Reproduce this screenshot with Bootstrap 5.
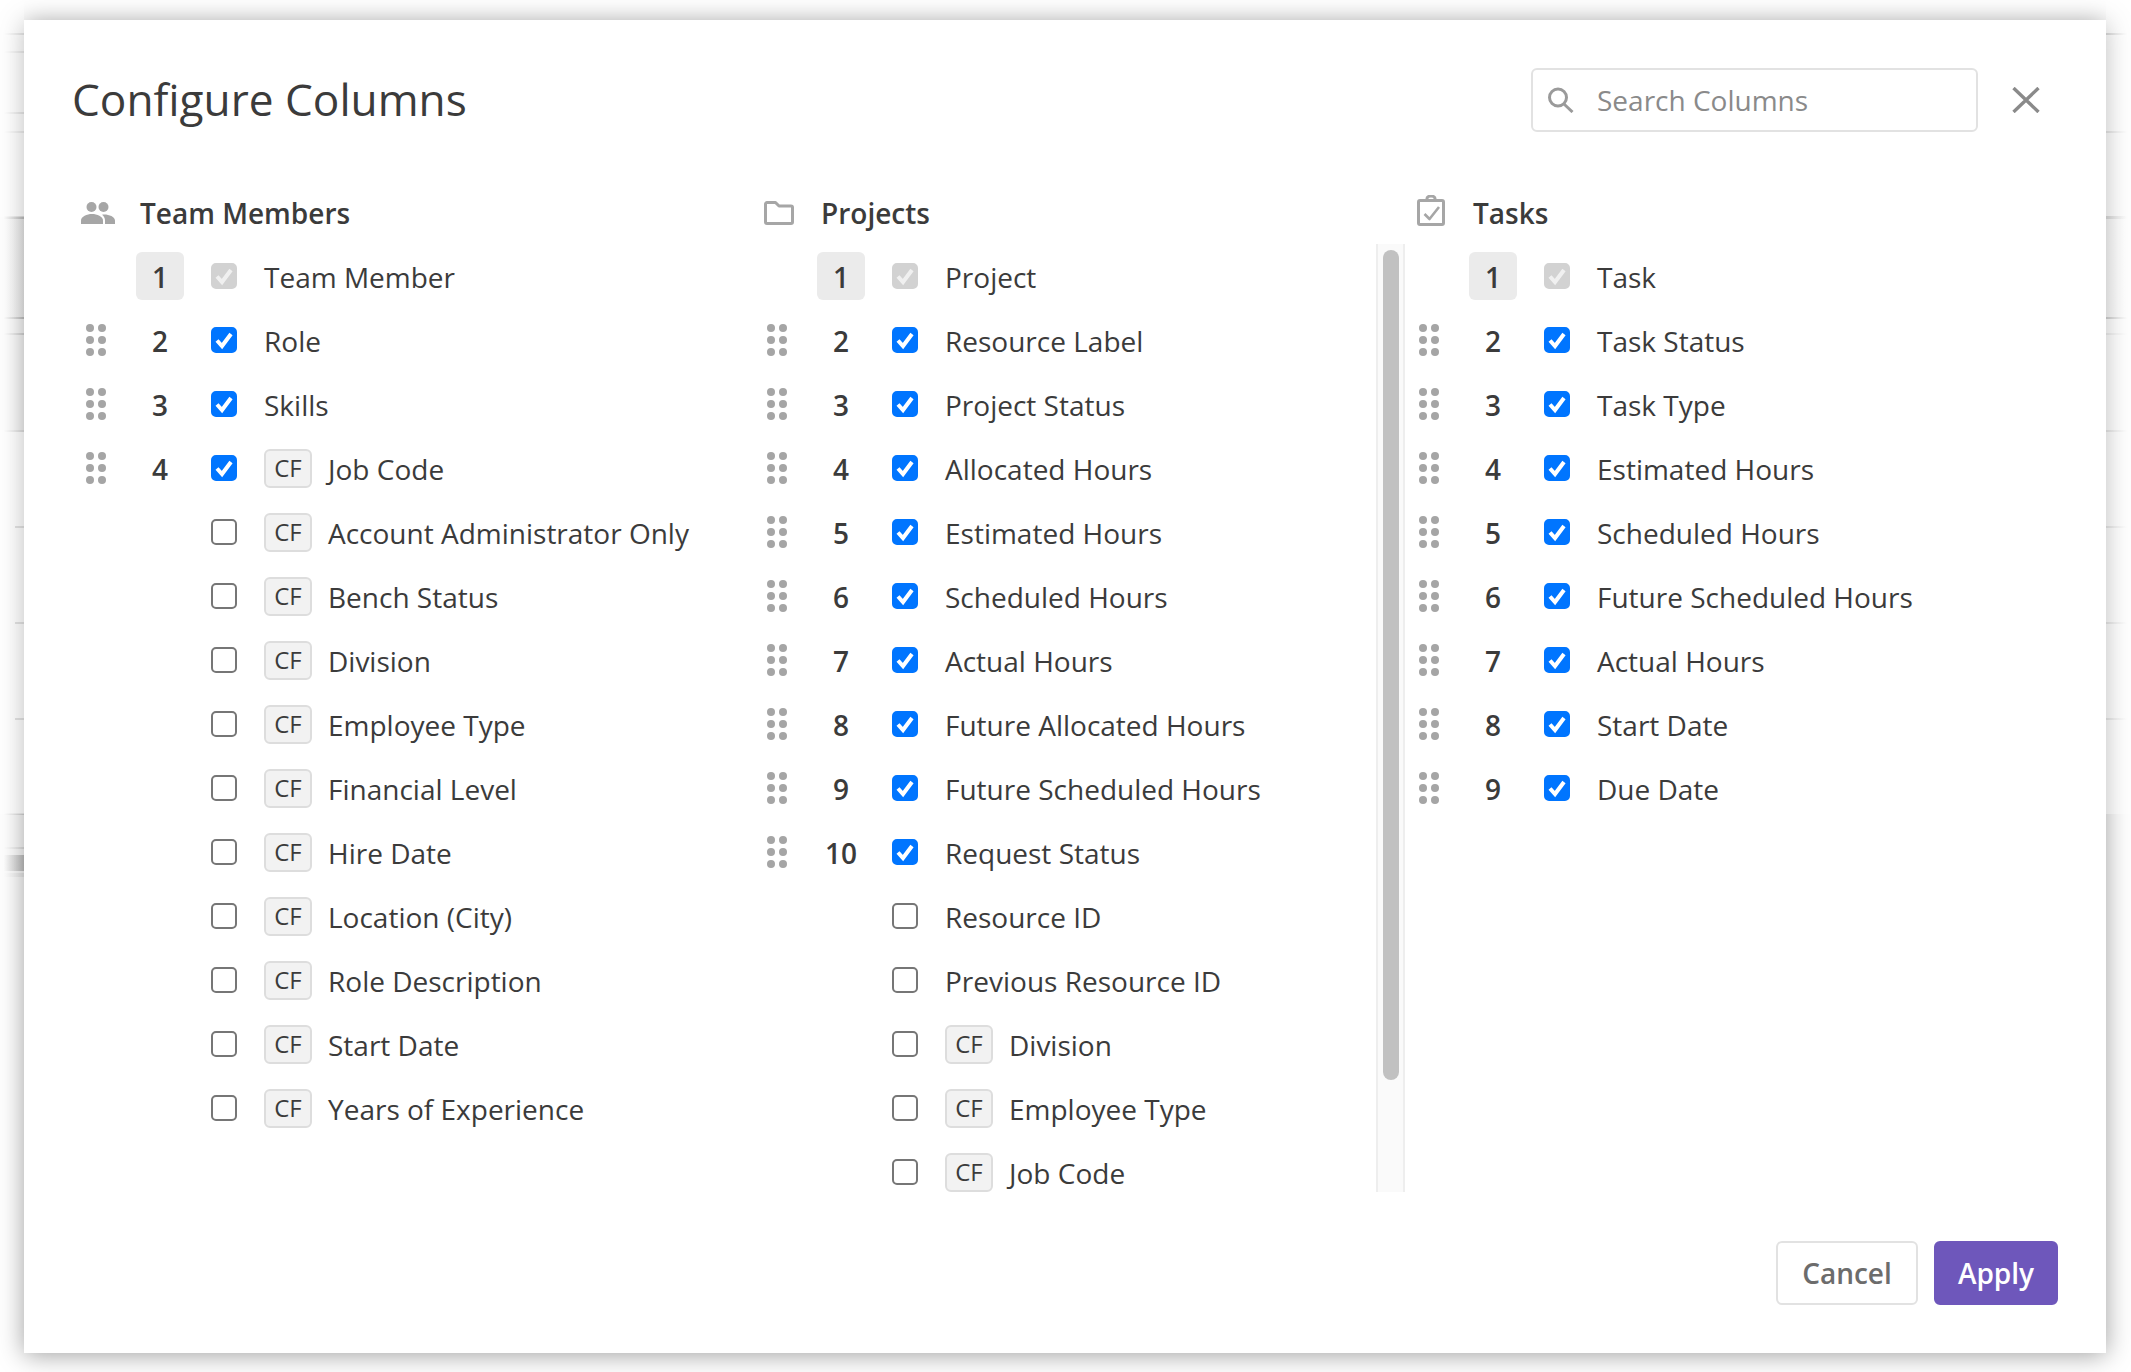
<!DOCTYPE html>
<html lang="en">
<head>
<meta charset="utf-8">
<title>Configure Columns</title>
<link href="https://cdn.jsdelivr.net/npm/bootstrap@5.3.0/dist/css/bootstrap.min.css" rel="stylesheet">
<style>
html,body{height:100%;margin:0;background:#fff;overflow:hidden}
body{font-family:"Open Sans","Noto Sans",sans-serif;color:#3b3b3b;font-size:28px}
.back-page{position:absolute;inset:0;background:
 linear-gradient(90deg,transparent 15%,#d8d8d8) 0 33px/24px 2px no-repeat,
 linear-gradient(90deg,transparent 15%,#e0e0e0) 0 51px/24px 2px no-repeat,
 linear-gradient(90deg,transparent 15%,#d8d8d8) 0 112px/24px 2px no-repeat,
 linear-gradient(90deg,transparent 15%,#e0e0e0) 0 131px/24px 2px no-repeat,
 linear-gradient(90deg,transparent 15%,#c8c8c8) 0 216px/24px 3px no-repeat,
 linear-gradient(90deg,transparent 25%,#f6f6f6) 0 219px/24px 98px no-repeat,
 linear-gradient(90deg,transparent 15%,#c8c8c8) 0 317px/24px 2px no-repeat,
 linear-gradient(90deg,transparent 15%,#dcdcdc) 0 333px/24px 2px no-repeat,
 linear-gradient(90deg,transparent 15%,#c8c8c8) 0 430px/24px 2px no-repeat,
 linear-gradient(#d4d4d4,#d4d4d4) 15px 526px/9px 2px no-repeat,
 linear-gradient(#d4d4d4,#d4d4d4) 15px 622px/9px 2px no-repeat,
 linear-gradient(#d4d4d4,#d4d4d4) 15px 718px/9px 2px no-repeat,
 linear-gradient(90deg,transparent 15%,#dcdcdc) 0 813px/24px 2px no-repeat,
 linear-gradient(90deg,transparent 15%,#e6e6e6) 0 847px/24px 2px no-repeat,
 linear-gradient(90deg,transparent 15%,#c6c6c6) 0 855px/24px 16px no-repeat,
 linear-gradient(90deg,transparent 15%,#eee) 0 873px/24px 4px no-repeat,
 linear-gradient(270deg,transparent 15%,#c8c8c8) 2106px 33px/25px 2px no-repeat,
 linear-gradient(270deg,transparent 15%,#d8d8d8) 2106px 131px/25px 2px no-repeat,
 linear-gradient(270deg,transparent 15%,#c8c8c8) 2106px 216px/25px 3px no-repeat,
 linear-gradient(270deg,transparent 25%,#f6f6f6) 2106px 219px/25px 98px no-repeat,
 linear-gradient(270deg,transparent 15%,#b8b8b8) 2106px 317px/25px 2px no-repeat,
 linear-gradient(270deg,transparent 15%,#e6e6e6) 2106px 333px/25px 2px no-repeat,
 linear-gradient(270deg,transparent 15%,#dcdcdc) 2106px 430px/25px 2px no-repeat,
 linear-gradient(270deg,transparent 15%,#dcdcdc) 2106px 526px/25px 2px no-repeat,
 linear-gradient(270deg,transparent 15%,#dcdcdc) 2106px 622px/25px 2px no-repeat,
 linear-gradient(270deg,transparent 15%,#dcdcdc) 2106px 718px/25px 2px no-repeat;}
.dlg-shadow{position:absolute;left:24px;top:20px;width:2082px;height:1333px;box-shadow:0 2px 24px rgba(0,0,0,.38)}
.veil-side{position:absolute;background:rgba(255,255,255,.32)}
.veil-r{left:2106px;top:0;width:25px;height:814px}
.veil-l{left:0;top:0;width:24px;height:217px}
.veil-l2{left:0;top:430px;width:24px;height:384px}
.cfg-dialog{position:absolute;left:24px;top:20px;width:2082px;height:1333px;background:#fff;padding:48px 48px 0 49px}
.cfg-title{font-size:44.2px;font-weight:400;line-height:64px;color:#3b3b3b;margin:-1px 0 0 -1px;height:65px}
.search-box{width:447px;height:64px;border:2px solid #e2e2e2;border-radius:6px;padding-left:14px;margin-right:34px}
.search-box svg{width:27px;height:26px;flex:none}
.search-input{border:0;outline:0;background:none;padding:0;margin-left:23px;font-size:28px;color:#3b3b3b;width:340px}
.search-input::placeholder{color:#8a8a8a;opacity:1}
.close-x{width:28px;height:26px;border:0;background:none;padding:0;margin-right:18px;display:flex}
.cols-wrap{margin-top:58px;margin-left:-1px}
.col-a{flex:0 0 681px}
.col-b{flex:0 0 652px}
.col-c{flex:1 1 auto}
.col-head{height:46px;margin-bottom:8px;font-weight:600;line-height:46px}
.head-ico{width:52px;margin-right:16px;flex:none;display:flex;justify-content:center}
.ico-raised{margin-bottom:5px}
.cols-list{height:948px;overflow:hidden}
.col-row{height:64px;padding-left:14px;line-height:1}
.grip{width:20px;height:32px;flex:none;fill:#a5a5a5}
.no-grip{width:20px;flex:none}
.num-cell{width:48px;height:48px;margin-left:30px;margin-right:27px;flex:none;border-radius:6px;text-align:center;line-height:50px;font-weight:600;color:#3b3b3b}
.num-locked{background:#ebebeb}
.form-check-input.cfg-check{width:26px;height:26px;margin:0;flex:none;border:2px solid #767676;border-radius:5px;background-size:26px 26px;box-shadow:none;opacity:1}
.form-check-input.cfg-check:checked{background-color:#0075ff;border-color:#0075ff;background-position:center;background-image:url("data:image/svg+xml,%3csvg xmlns='http://www.w3.org/2000/svg' viewBox='0 0 26 26'%3e%3cpath fill='none' stroke='%23fff' stroke-width='4' d='M6 13.5l5 5.5 9-12'/%3e%3c/svg%3e")}
.form-check-input.cfg-check:disabled{background-color:#d2d2d2;border-color:#d2d2d2;opacity:1;background-image:url("data:image/svg+xml,%3csvg xmlns='http://www.w3.org/2000/svg' viewBox='0 0 26 26'%3e%3cpath fill='none' stroke='%23f0f0f0' stroke-width='4' d='M6 13.5l5 5.5 9-12'/%3e%3c/svg%3e")}
.col-label{margin-left:27px;white-space:nowrap;padding-top:2px}
.cf-tag{width:48px;height:39px;margin-left:27px;margin-right:-11px;margin-top:1px;flex:none;border:2px solid #ddd;border-radius:6px;background:#f2f2f2;font-size:24px;line-height:33px;text-align:center;color:#3b3b3b}
.scroll-track{flex:0 0 29px;height:948px;background:#fafafa;border-left:2px solid #eee;border-right:2px solid #eee;padding:6px 4px 0 5px}
.scroll-thumb{height:830px;background:#c1c1c1;border-radius:8px}
.foot-bar{margin-top:49px}
.btn.btn-cancel,.btn.btn-apply{height:64px;font-size:28px;font-weight:600;padding:0;border-radius:6px;line-height:58px}
.btn.btn-cancel{width:142px;border:2px solid #e2e2e2;background:#fff;color:#6c6c6c}
.btn.btn-apply{width:124px;border:2px solid #6e57bb;background:#6e57bb;color:#fff;margin-left:16px}
</style>
</head>
<body>
<svg width="0" height="0" class="position-absolute">
<symbol id="grip6" viewBox="0 0 20 32"><circle cx="4" cy="4" r="4"/><circle cx="16" cy="4" r="4"/><circle cx="4" cy="16" r="4"/><circle cx="16" cy="16" r="4"/><circle cx="4" cy="28" r="4"/><circle cx="16" cy="28" r="4"/></symbol>
</svg>
<div class="back-page"></div>
<div class="dlg-shadow"></div>
<div class="veil-side veil-r"></div>
<div class="veil-side veil-l"></div>
<div class="veil-side veil-l2"></div>
<div class="cfg-dialog d-flex flex-column">
  <div class="d-flex align-items-center">
    <h1 class="cfg-title flex-grow-1">Configure Columns</h1>
    <div class="search-box d-flex align-items-center">
      <svg viewBox="0 0 27 26" fill="none" stroke="#9a9a9a" stroke-width="3"><circle cx="11" cy="10.5" r="8.5"/><path d="M17 17l8.5 8"/></svg>
      <input class="search-input" type="text" placeholder="Search Columns">
    </div>
    <button class="close-x" type="button" aria-label="Close"><svg width="28" height="26" viewBox="0 0 28 26" fill="none" stroke="#8a8a8a" stroke-width="3.4"><path d="M1.5 1l25 24M26.5 1l-25 24"/></svg></button>
  </div>
  <div class="cols-wrap d-flex">
    <section class="col-a">
      <div class="col-head d-flex align-items-center">
        <span class="head-ico"><svg width="34" height="22" viewBox="0 0 34 22" fill="#a6a6a6"><circle cx="10.5" cy="5" r="5"/><circle cx="22.5" cy="5" r="5"/><path d="M0 22v-3.500C0 14.500 6 12 11 12s11 2.500 11 6.500V22z"/><path d="M24 22v-3.500c0-2.500-1.200-4.500-3-5.800.8-.2 1.600-.2 2.400-.2 4.600 0 10.600 2.200 10.600 6V22z"/></svg></span>
        <span>Team Members</span>
      </div>
      <div class="cols-list">
        <div class="col-row d-flex align-items-center"><span class="no-grip"></span><span class="num-cell num-locked">1</span><input class="form-check-input cfg-check" type="checkbox" checked disabled><span class="col-label">Team Member</span></div>
        <div class="col-row d-flex align-items-center"><svg class="grip"><use href="#grip6"/></svg><span class="num-cell">2</span><input class="form-check-input cfg-check" type="checkbox" checked><span class="col-label">Role</span></div>
        <div class="col-row d-flex align-items-center"><svg class="grip"><use href="#grip6"/></svg><span class="num-cell">3</span><input class="form-check-input cfg-check" type="checkbox" checked><span class="col-label">Skills</span></div>
        <div class="col-row d-flex align-items-center"><svg class="grip"><use href="#grip6"/></svg><span class="num-cell">4</span><input class="form-check-input cfg-check" type="checkbox" checked><span class="cf-tag">CF</span><span class="col-label">Job Code</span></div>
        <div class="col-row d-flex align-items-center"><span class="no-grip"></span><span class="num-cell"></span><input class="form-check-input cfg-check" type="checkbox"><span class="cf-tag">CF</span><span class="col-label">Account Administrator Only</span></div>
        <div class="col-row d-flex align-items-center"><span class="no-grip"></span><span class="num-cell"></span><input class="form-check-input cfg-check" type="checkbox"><span class="cf-tag">CF</span><span class="col-label">Bench Status</span></div>
        <div class="col-row d-flex align-items-center"><span class="no-grip"></span><span class="num-cell"></span><input class="form-check-input cfg-check" type="checkbox"><span class="cf-tag">CF</span><span class="col-label">Division</span></div>
        <div class="col-row d-flex align-items-center"><span class="no-grip"></span><span class="num-cell"></span><input class="form-check-input cfg-check" type="checkbox"><span class="cf-tag">CF</span><span class="col-label">Employee Type</span></div>
        <div class="col-row d-flex align-items-center"><span class="no-grip"></span><span class="num-cell"></span><input class="form-check-input cfg-check" type="checkbox"><span class="cf-tag">CF</span><span class="col-label">Financial Level</span></div>
        <div class="col-row d-flex align-items-center"><span class="no-grip"></span><span class="num-cell"></span><input class="form-check-input cfg-check" type="checkbox"><span class="cf-tag">CF</span><span class="col-label">Hire Date</span></div>
        <div class="col-row d-flex align-items-center"><span class="no-grip"></span><span class="num-cell"></span><input class="form-check-input cfg-check" type="checkbox"><span class="cf-tag">CF</span><span class="col-label">Location (City)</span></div>
        <div class="col-row d-flex align-items-center"><span class="no-grip"></span><span class="num-cell"></span><input class="form-check-input cfg-check" type="checkbox"><span class="cf-tag">CF</span><span class="col-label">Role Description</span></div>
        <div class="col-row d-flex align-items-center"><span class="no-grip"></span><span class="num-cell"></span><input class="form-check-input cfg-check" type="checkbox"><span class="cf-tag">CF</span><span class="col-label">Start Date</span></div>
        <div class="col-row d-flex align-items-center"><span class="no-grip"></span><span class="num-cell"></span><input class="form-check-input cfg-check" type="checkbox"><span class="cf-tag">CF</span><span class="col-label">Years of Experience</span></div>
      </div>
    </section>
    <section class="col-b">
      <div class="col-head d-flex align-items-center">
        <span class="head-ico"><svg width="30" height="24" viewBox="0 0 30 24" fill="none" stroke="#a6a6a6" stroke-width="3" stroke-linejoin="round"><path d="M1.500 3a1.500 1.500 0 0 1 1.500-1.500h8.500l3.500 3.500h12a1.500 1.500 0 0 1 1.500 1.500V21a1.500 1.500 0 0 1-1.500 1.500H3A1.500 1.500 0 0 1 1.500 21z"/></svg></span>
        <span>Projects</span>
      </div>
      <div class="d-flex">
        <div class="cols-list flex-grow-1">
          <div class="col-row d-flex align-items-center"><span class="no-grip"></span><span class="num-cell num-locked">1</span><input class="form-check-input cfg-check" type="checkbox" checked disabled><span class="col-label">Project</span></div>
          <div class="col-row d-flex align-items-center"><svg class="grip"><use href="#grip6"/></svg><span class="num-cell">2</span><input class="form-check-input cfg-check" type="checkbox" checked><span class="col-label">Resource Label</span></div>
          <div class="col-row d-flex align-items-center"><svg class="grip"><use href="#grip6"/></svg><span class="num-cell">3</span><input class="form-check-input cfg-check" type="checkbox" checked><span class="col-label">Project Status</span></div>
          <div class="col-row d-flex align-items-center"><svg class="grip"><use href="#grip6"/></svg><span class="num-cell">4</span><input class="form-check-input cfg-check" type="checkbox" checked><span class="col-label">Allocated Hours</span></div>
          <div class="col-row d-flex align-items-center"><svg class="grip"><use href="#grip6"/></svg><span class="num-cell">5</span><input class="form-check-input cfg-check" type="checkbox" checked><span class="col-label">Estimated Hours</span></div>
          <div class="col-row d-flex align-items-center"><svg class="grip"><use href="#grip6"/></svg><span class="num-cell">6</span><input class="form-check-input cfg-check" type="checkbox" checked><span class="col-label">Scheduled Hours</span></div>
          <div class="col-row d-flex align-items-center"><svg class="grip"><use href="#grip6"/></svg><span class="num-cell">7</span><input class="form-check-input cfg-check" type="checkbox" checked><span class="col-label">Actual Hours</span></div>
          <div class="col-row d-flex align-items-center"><svg class="grip"><use href="#grip6"/></svg><span class="num-cell">8</span><input class="form-check-input cfg-check" type="checkbox" checked><span class="col-label">Future Allocated Hours</span></div>
          <div class="col-row d-flex align-items-center"><svg class="grip"><use href="#grip6"/></svg><span class="num-cell">9</span><input class="form-check-input cfg-check" type="checkbox" checked><span class="col-label">Future Scheduled Hours</span></div>
          <div class="col-row d-flex align-items-center"><svg class="grip"><use href="#grip6"/></svg><span class="num-cell">10</span><input class="form-check-input cfg-check" type="checkbox" checked><span class="col-label">Request Status</span></div>
          <div class="col-row d-flex align-items-center"><span class="no-grip"></span><span class="num-cell"></span><input class="form-check-input cfg-check" type="checkbox"><span class="col-label">Resource ID</span></div>
          <div class="col-row d-flex align-items-center"><span class="no-grip"></span><span class="num-cell"></span><input class="form-check-input cfg-check" type="checkbox"><span class="col-label">Previous Resource ID</span></div>
          <div class="col-row d-flex align-items-center"><span class="no-grip"></span><span class="num-cell"></span><input class="form-check-input cfg-check" type="checkbox"><span class="cf-tag">CF</span><span class="col-label">Division</span></div>
          <div class="col-row d-flex align-items-center"><span class="no-grip"></span><span class="num-cell"></span><input class="form-check-input cfg-check" type="checkbox"><span class="cf-tag">CF</span><span class="col-label">Employee Type</span></div>
          <div class="col-row d-flex align-items-center"><span class="no-grip"></span><span class="num-cell"></span><input class="form-check-input cfg-check" type="checkbox"><span class="cf-tag">CF</span><span class="col-label">Job Code</span></div>
        </div>
        <div class="scroll-track"><div class="scroll-thumb"></div></div>
      </div>
    </section>
    <section class="col-c">
      <div class="col-head d-flex align-items-center">
        <span class="head-ico"><svg class="ico-raised" width="28" height="31" viewBox="0 0 28 31" fill="none" stroke="#a6a6a6" stroke-width="3" stroke-linejoin="round"><rect x="1.500" y="5.500" width="25" height="24" rx="1.500"/><path d="M10 5V3.500a4 2.500 0 0 1 8 0V5"/><path d="M7.500 19l5 5 9.500-12" stroke-width="2.600"/></svg></span>
        <span>Tasks</span>
      </div>
      <div class="cols-list">
        <div class="col-row d-flex align-items-center"><span class="no-grip"></span><span class="num-cell num-locked">1</span><input class="form-check-input cfg-check" type="checkbox" checked disabled><span class="col-label">Task</span></div>
        <div class="col-row d-flex align-items-center"><svg class="grip"><use href="#grip6"/></svg><span class="num-cell">2</span><input class="form-check-input cfg-check" type="checkbox" checked><span class="col-label">Task Status</span></div>
        <div class="col-row d-flex align-items-center"><svg class="grip"><use href="#grip6"/></svg><span class="num-cell">3</span><input class="form-check-input cfg-check" type="checkbox" checked><span class="col-label">Task Type</span></div>
        <div class="col-row d-flex align-items-center"><svg class="grip"><use href="#grip6"/></svg><span class="num-cell">4</span><input class="form-check-input cfg-check" type="checkbox" checked><span class="col-label">Estimated Hours</span></div>
        <div class="col-row d-flex align-items-center"><svg class="grip"><use href="#grip6"/></svg><span class="num-cell">5</span><input class="form-check-input cfg-check" type="checkbox" checked><span class="col-label">Scheduled Hours</span></div>
        <div class="col-row d-flex align-items-center"><svg class="grip"><use href="#grip6"/></svg><span class="num-cell">6</span><input class="form-check-input cfg-check" type="checkbox" checked><span class="col-label">Future Scheduled Hours</span></div>
        <div class="col-row d-flex align-items-center"><svg class="grip"><use href="#grip6"/></svg><span class="num-cell">7</span><input class="form-check-input cfg-check" type="checkbox" checked><span class="col-label">Actual Hours</span></div>
        <div class="col-row d-flex align-items-center"><svg class="grip"><use href="#grip6"/></svg><span class="num-cell">8</span><input class="form-check-input cfg-check" type="checkbox" checked><span class="col-label">Start Date</span></div>
        <div class="col-row d-flex align-items-center"><svg class="grip"><use href="#grip6"/></svg><span class="num-cell">9</span><input class="form-check-input cfg-check" type="checkbox" checked><span class="col-label">Due Date</span></div>
      </div>
    </section>
  </div>
  <div class="foot-bar d-flex justify-content-end">
    <button type="button" class="btn btn-cancel">Cancel</button>
    <button type="button" class="btn btn-apply">Apply</button>
  </div>
</div>
<script src="https://cdn.jsdelivr.net/npm/bootstrap@5.3.0/dist/js/bootstrap.bundle.min.js"></script>
</body>
</html>
